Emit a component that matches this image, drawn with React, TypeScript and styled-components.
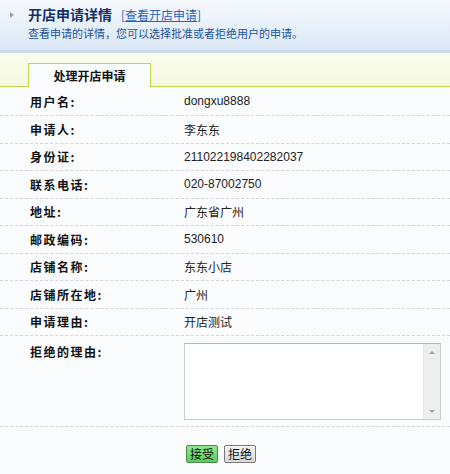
import React from "react";
import styled, { createGlobalStyle } from "styled-components";

const Global = createGlobalStyle`
  html, body { margin: 0; padding: 0; background: #fafcfe; }
  body {
    font-family: "Liberation Sans", "Noto Sans CJK SC", sans-serif;
    font-size: 12px;
    color: #222;
  }
`;

const Page = styled.div`
  width: 450px;
  height: 474px;
  background: #fafcfe;
  overflow: hidden;
`;

const Header = styled.div`
  height: 53px;
  box-sizing: border-box;
  padding: 4px 0 0 28px;
  background: linear-gradient(#f6f9fd, #dae7f5);
  border-bottom: 3px solid #cbd9e9;
  position: relative;
`;

const Arrow = styled.span`
  position: absolute;
  left: 10px;
  top: 12px;
  width: 0;
  height: 0;
  border-top: 3px solid transparent;
  border-bottom: 3px solid transparent;
  border-left: 4px solid #9aa8b8;
`;

const TitleLine = styled.div`
  display: flex;
  align-items: baseline;
  gap: 9px;
  height: 19px;
`;

const Title = styled.span`
  font-family: "Noto Sans CJK SC", sans-serif;
  font-weight: 700;
  font-size: 14px;
  color: #12306a;
`;

const Link = styled.a`
  font-family: "Noto Sans CJK SC", sans-serif;
  font-size: 12px;
  color: #2a62c0;
  text-decoration: none;
  span { text-decoration: underline; }
`;

const Subtitle = styled.div`
  margin-top: 2px;
  font-family: "Noto Sans CJK SC", sans-serif;
  font-size: 11px;
  color: #24529a;
`;

const TabStrip = styled.div`
  height: 34px;
  box-sizing: border-box;
  background: linear-gradient(#fbfcee, #f5f9de);
  border-bottom: 1px solid #bcd84a;
  display: flex;
  align-items: flex-end;
  padding-left: 28px;
`;

const Tab = styled.div`
  width: 123px;
  height: 24px;
  margin-bottom: -1px;
  box-sizing: border-box;
  border: 1px solid #bcd84a;
  border-bottom: none;
  background: #fafcfe;
  display: flex;
  align-items: center;
  justify-content: center;
  font-family: "Noto Sans CJK SC", sans-serif;
  font-weight: 700;
  font-size: 12px;
  color: #111;
`;

const Form = styled.div`
  display: flex;
  flex-direction: column;
`;

const Row = styled.div<{ $h?: number; $top?: boolean }>`
  display: grid;
  grid-template-columns: 154px 1fr;
  align-items: ${(p) => (p.$top ? "start" : "center")};
  height: ${(p) => p.$h ?? 27.5}px;
  box-sizing: border-box;
  padding: ${(p) => (p.$top ? "7px" : "0")} 9px 0 30px;
  border-bottom: 1px dashed #d2d6dc;
`;

const Label = styled.div`
  font-family: "Noto Sans CJK SC", sans-serif;
  font-weight: 700;
  font-size: 12px;
  letter-spacing: 1.5px;
  color: #111;
`;

const Value = styled.div`
  font-family: "Liberation Sans", "Noto Sans CJK SC", sans-serif;
  font-size: 12px;
  color: #222;
`;

const TextBox = styled.div`
  display: flex;
  width: 257px;
  height: 77px;
  box-sizing: border-box;
  border: 1px solid #c8ccd2;
  border-top-color: #b4b8be;
  background: #fff;
`;

const TextArea = styled.textarea`
  flex: 1;
  border: none;
  outline: none;
  resize: none;
  overflow: hidden;
  margin: 0;
  padding: 2px;
  background: transparent;
  font-size: 12px;
`;

const ScrollBar = styled.div`
  width: 16px;
  background: #eeeeee;
  border-left: 1px solid #e4e4e4;
  display: flex;
  flex-direction: column;
  justify-content: space-between;
  align-items: center;
  padding: 7px 0 6px;
`;

const ScrollArrow = styled.span<{ $down?: boolean }>`
  width: 0;
  height: 0;
  border-left: 3px solid transparent;
  border-right: 3px solid transparent;
  ${(p) =>
    p.$down ? "border-top: 3px solid #a0a0a0;" : "border-bottom: 3px solid #a0a0a0;"}
`;

const Actions = styled.div`
  display: flex;
  gap: 6px;
  padding: 18px 0 0 186px;
`;

const Button = styled.button<{ $primary?: boolean }>`
  height: 18px;
  padding: 0 3px;
  margin: 0;
  font-family: "Noto Sans CJK SC", sans-serif;
  font-size: 12px;
  line-height: 14px;
  color: #111;
  border: 1px solid ${(p) => (p.$primary ? "#4a8a4a" : "#7a7a7a")};
  border-radius: 2px;
  background: ${(p) =>
    p.$primary
      ? "linear-gradient(#8fe88f, #5ccc5c)"
      : "linear-gradient(#f4f4f4, #d8d8d8)"};
`;

const rows: [string, string][] = [
  ["用户名:", "dongxu8888"],
  ["申请人:", "李东东"],
  ["身份证:", "211022198402282037"],
  ["联系电话:", "020-87002750"],
  ["地址:", "广东省广州"],
  ["邮政编码:", "530610"],
  ["店铺名称:", "东东小店"],
  ["店铺所在地:", "广州"],
  ["申请理由:", "开店测试"],
];

export default function App() {
  return (
    <Page>
      <Global />
      <Header>
        <Arrow />
        <TitleLine>
          <Title>开店申请详情</Title>
          <Link href="#">
            [<span>查看开店申请</span>]
          </Link>
        </TitleLine>
        <Subtitle>查看申请的详情，您可以选择批准或者拒绝用户的申请。</Subtitle>
      </Header>
      <TabStrip>
        <Tab>处理开店申请</Tab>
      </TabStrip>
      <Form>
        {rows.map(([label, value], i) => (
          <Row key={label} $h={i === 0 ? 29 : undefined}>
            <Label>{label}</Label>
            <Value>{value}</Value>
          </Row>
        ))}
        <Row $h={91} $top>
          <Label>拒绝的理由:</Label>
          <TextBox>
            <TextArea />
            <ScrollBar>
              <ScrollArrow />
              <ScrollArrow $down />
            </ScrollBar>
          </TextBox>
        </Row>
      </Form>
      <Actions>
        <Button $primary>接受</Button>
        <Button>拒绝</Button>
      </Actions>
    </Page>
  );
}
